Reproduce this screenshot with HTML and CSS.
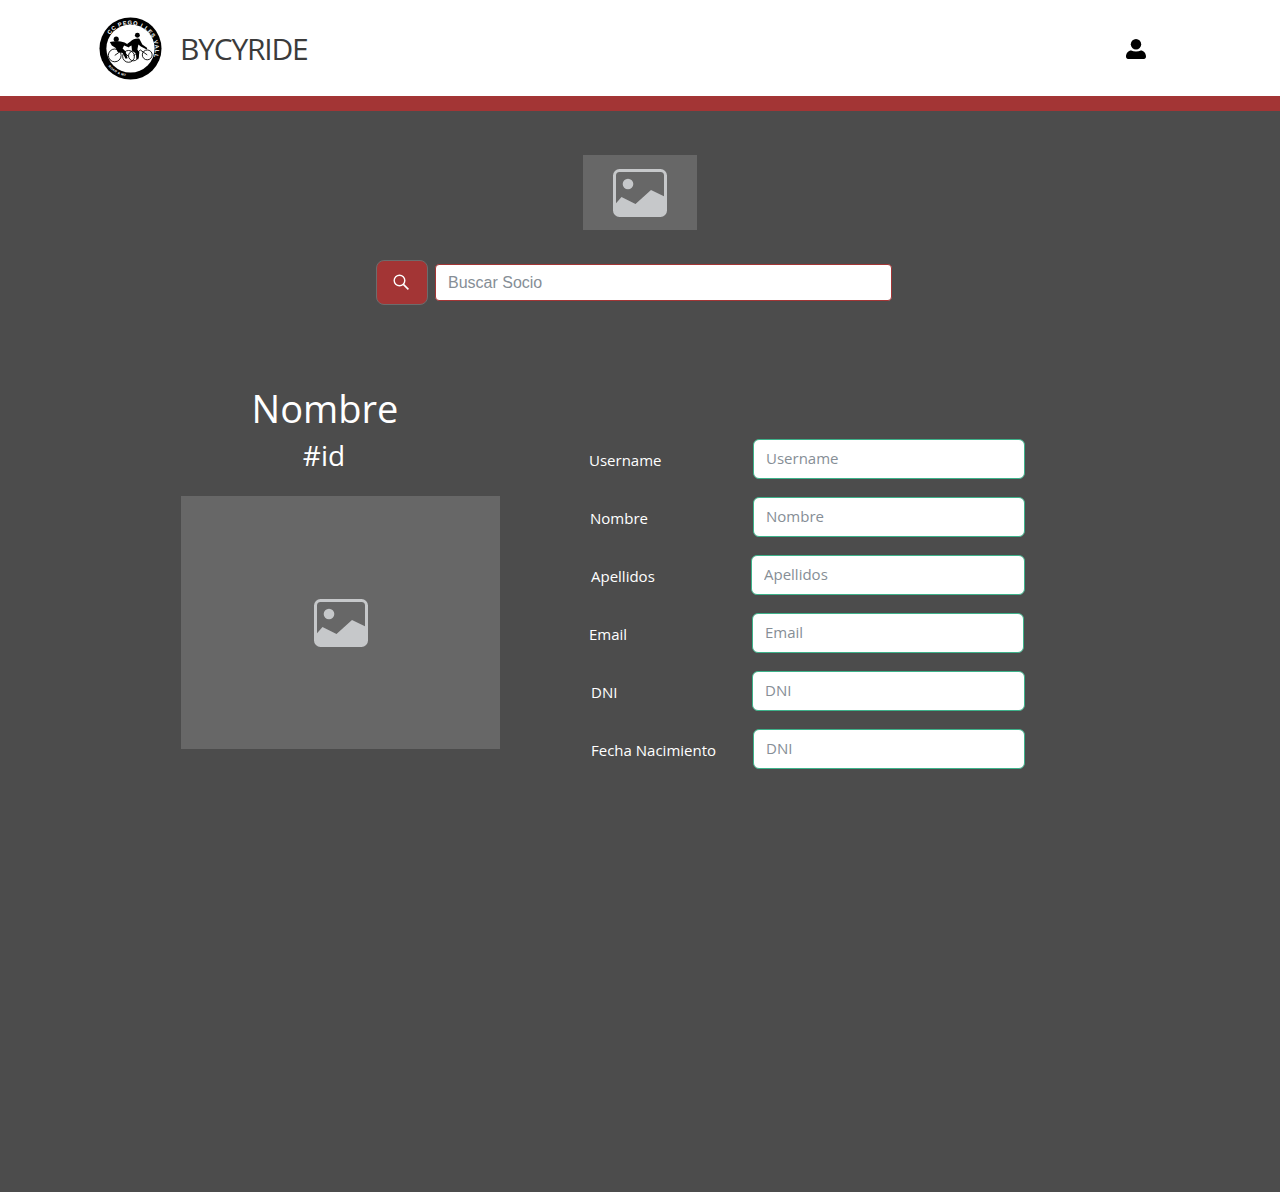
FILE: index.html
```html
<!DOCTYPE html>
<html lang="es">
<head>
<meta charset="utf-8">
<title>BYCYRIDE</title>
<link rel="stylesheet" href="styles.css">
</head>
<body>
<svg class="defs" width="0" height="0" aria-hidden="true">
  <symbol id="pic" viewBox="0 0 54 48">
    <rect x="1.500" y="1.500" width="51" height="45" rx="5" fill="none" stroke="#c6c8ca" stroke-width="3"/>
    <circle cx="15" cy="15" r="5.300" fill="#c6c8ca"/>
    <path d="M1.500 36 8.500 28 22.500 35 38 21 52.500 28V41a5.500 5.500 0 0 1-5.500 5.500H7A5.500 5.500 0 0 1 1.500 41z" fill="#c6c8ca"/>
  </symbol>
</svg>

<header class="topbar">
  <a class="brand" href="#">
    <svg class="logo" viewBox="0 0 64 64" aria-label="CC Pego i les Valls">
      <defs>
        <path id="ring-top" d="M11 18A25.500 25.500 0 0 1 55 43"/>
        <path id="ring-bottom" d="M9.500 50A28.500 28.500 0 0 0 27 60"/>
      </defs>
      <circle cx="32" cy="32" r="31.500" fill="#000"/>
      <circle cx="32" cy="32" r="24.500" fill="#fff"/>
      <text class="ring-text"><textPath href="#ring-top">CC PEGO I LES VALLS</textPath></text>
      <text class="ring-small"><textPath href="#ring-bottom">ROAD &amp; MTB</textPath></text>
      <g fill="none" stroke="#000" stroke-width=".9">
        <circle cx="16" cy="39" r="6.500"/>
        <circle cx="30" cy="40" r="6"/>
        <circle cx="35" cy="39.500" r="5"/>
        <circle cx="49" cy="38.500" r="5"/>
        <path d="M16 39l7-5 7 6M35 39.500l7-6 7 5"/>
      </g>
      <g fill="#000">
        <circle cx="17.500" cy="22.500" r="2.600"/>
        <path d="M11 25.500c5-1.500 11-1 15 .5l5 3-.5 2-5-2-1.500 3 3 3 2 7-2 .5-3-6-5-1-2-4-4-2.500z"/>
        <circle cx="39" cy="18.500" r="2.500"/>
        <path d="M32 25c2-2.500 6-3.500 9-3l3 6 5 3.500-.5 1.500-6-3-2.500-2-1 5 2 3-1 7h-2l-.500-6-4-3-.500-5-3 1.500-1.500-3z"/>
      </g>
    </svg>
    <span class="wordmark">BYCYRIDE</span>
  </a>
  <button class="user-btn" type="button" aria-label="Usuario">
    <svg viewBox="0 0 20 20" width="20" height="20"><circle cx="10" cy="5.200" r="5.200"/><path d="M0 17.800C0 14 2.600 11.600 5.200 11.600c1.400.7 3 1 4.800 1s3.400-.3 4.800-1c2.600 0 5.200 2.400 5.200 6.200 0 1.200-.9 2.200-2 2.200H2c-1.100 0-2-1-2-2.200z"/></svg>
  </button>
</header>

<main class="content">
  <div class="cover">
    <svg class="placeholder-icon" viewBox="0 0 54 48"><use href="#pic"/></svg>
  </div>

  <form class="search">
    <button class="search-btn" type="button" aria-label="Buscar">
      <svg viewBox="0 0 16 16" width="16" height="16" fill="none" stroke="#fff" stroke-width="1.400"><circle cx="6.500" cy="6.500" r="5.300"/><path d="M10.400 10.400 15.400 15.400" stroke-width="1.600"/></svg>
    </button>
    <input class="search-input" type="text" placeholder="Buscar Socio">
  </form>

  <section class="profile">
    <div class="identity">
      <h1 class="name">Nombre</h1>
      <p class="ident">#id</p>
      <div class="photo">
        <svg class="placeholder-icon" viewBox="0 0 54 48"><use href="#pic"/></svg>
      </div>
    </div>
    <div class="fields">
      <div class="row r1"><label>Username</label><input type="text" placeholder="Username"></div>
      <div class="row r2"><label>Nombre</label><input type="text" placeholder="Nombre"></div>
      <div class="row r3"><label>Apellidos</label><input type="text" placeholder="Apellidos"></div>
      <div class="row r4"><label>Email</label><input type="text" placeholder="Email"></div>
      <div class="row r5"><label>DNI</label><input type="text" placeholder="DNI"></div>
      <div class="row r6"><label>Fecha Nacimiento</label><input type="text" placeholder="DNI"></div>
    </div>
  </section>
</main>
</body>
</html>
```
FILE: styles.css
```css
* { box-sizing: border-box; }

html, body { height: 100%; }

body {
  margin: 0;
  min-height: 1192px;
  background: #4c4c4c;
  font-family: "Open Sans", "Noto Sans", sans-serif;
  color: #fff;
}

.defs { position: absolute; }

.topbar {
  height: 111px;
  background: #fff;
  border-bottom: 15px solid #a33535;
  padding: 17px 124px 0 99px;
  display: flex;
  align-items: flex-start;
  justify-content: space-between;
}

.brand {
  display: flex;
  align-items: center;
  gap: 18px;
  text-decoration: none;
}

.logo { width: 63px; height: 63px; display: block; }

.ring-text {
  font: 700 5.800px "Liberation Sans", sans-serif;
  letter-spacing: .7px;
  fill: #fff;
}

.ring-small {
  font: 700 3.200px "Liberation Sans", sans-serif;
  letter-spacing: .3px;
  fill: #fff;
}

.wordmark {
  font-size: 30px;
  letter-spacing: -1.200px;
  color: #3b3b3b;
  line-height: 1;
}

.user-btn {
  width: 40px;
  height: 40px;
  margin-top: 12px;
  padding: 0;
  border: 0;
  background: none;
  display: flex;
  align-items: center;
  justify-content: center;
}

.content { padding-top: 44px; }

.cover {
  width: 114px;
  height: 75px;
  margin: 0 auto;
  background: #676767;
  display: flex;
  align-items: center;
  justify-content: center;
}

.placeholder-icon { width: 54px; height: 48px; display: block; }

.search {
  display: flex;
  align-items: center;
  gap: 7px;
  margin: 30px 0 0 376px;
}

.search-btn {
  width: 52px;
  height: 45px;
  padding: 0 2px 2px 0;
  border: 1px solid #6c6c6c;
  border-radius: 8px;
  background: #a33535;
  display: flex;
  align-items: center;
  justify-content: center;
}

.search-input {
  width: 457px;
  height: 37px;
  padding: 0 12px;
  border: 1px solid #a33535;
  border-radius: 4px;
  background: #fff;
  font: 16px "Liberation Sans", Arial, sans-serif;
  color: #495057;
}

.search-input::placeholder { color: #868e96; opacity: 1; }

.profile {
  display: flex;
  align-items: flex-start;
  margin: 79px 0 0 181px;
}

.identity { width: 319px; }

.name {
  margin: 0;
  width: 288px;
  text-align: center;
  font-size: 38px;
  font-weight: 400;
  line-height: 48px;
}

.ident {
  margin: 6px 0 0;
  width: 286px;
  text-align: center;
  font-size: 28px;
  line-height: 34px;
}

.photo {
  height: 253px;
  margin-top: 24px;
  background: #676767;
  display: flex;
  align-items: center;
  justify-content: center;
}

.fields {
  margin: 55px 0 0 89px;
  display: flex;
  flex-direction: column;
  gap: 18px;
}

.row {
  width: 436px;
  height: 40px;
  display: flex;
  align-items: center;
  justify-content: space-between;
}

.row label {
  font-size: 15px;
  line-height: 24px;
  margin-top: 1px;
  white-space: nowrap;
}

.row input {
  width: 272px;
  height: 40px;
  padding: 0 12px 2px;
  border: 1px solid #3db28a;
  border-radius: 6px;
  background: #fff;
  font: 15px "Open Sans", "Noto Sans", sans-serif;
  color: #495057;
}

.row input::placeholder { color: #868e96; opacity: 1; }

.r2 label { margin-left: 1px; }
.r3 label, .r5 label, .r6 label { margin-left: 2px; }
.r3 input { width: 274px; }
.r4 input { margin-right: 1px; }
.r5 input { width: 273px; }
```
